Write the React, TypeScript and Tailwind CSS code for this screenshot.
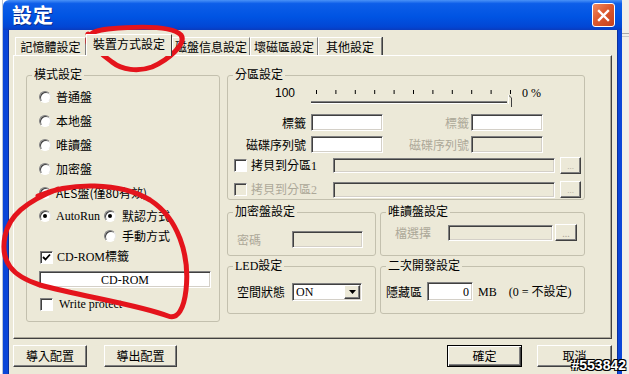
import React from 'react';

const cjk = "font-['Noto_Sans_CJK_TC',sans-serif]";
const mixed = "font-['Liberation_Serif','Noto_Sans_CJK_TC',serif]";

function Radio({ on }: { on?: boolean }) {
  return (
    <span className="flex items-center justify-center w-[12px] h-[12px] shrink-0 rounded-full bg-white border border-t-[#808080] border-l-[#808080] border-b-white border-r-[#e8e8e8] shadow-[inset_1px_1px_0_#404040]">
      {on && <span className="w-[4px] h-[4px] rounded-full bg-black" />}
    </span>
  );
}

function Check({ on, disabled }: { on?: boolean; disabled?: boolean }) {
  return (
    <span
      className={`flex items-center justify-center w-[13px] h-[13px] shrink-0 border border-t-[#808080] border-l-[#808080] border-b-white border-r-white shadow-[inset_1px_1px_0_#404040] ${
        disabled ? 'bg-[#ece9d8]' : 'bg-white'
      }`}
    >
      {on && (
        <svg width="9" height="9" viewBox="0 0 9 9">
          <path d="M1 4 L3.5 6.5 L8 1.5" stroke="#000" strokeWidth="1.8" fill="none" />
        </svg>
      )}
    </span>
  );
}

function Field({
  className = '',
  gray,
  children,
}: {
  className?: string;
  gray?: boolean;
  children?: React.ReactNode;
}) {
  return (
    <div
      className={`shrink-0 border border-t-[#808080] border-l-[#808080] border-b-white border-r-white shadow-[inset_1px_1px_0_#404040,inset_-1px_-1px_0_#d4d0c8] ${
        gray ? 'bg-[#ece9d8]' : 'bg-white'
      } ${className}`}
    >
      {children}
    </div>
  );
}

function Dots({ className = '' }: { className?: string }) {
  return (
    <div
      className={`shrink-0 flex items-end justify-center pb-[2px] text-[9px] leading-[9px] text-[#aca899] bg-[#ece9d8] border border-t-white border-l-white border-b-[#404040] border-r-[#404040] shadow-[inset_-1px_-1px_0_#808080] ${className}`}
    >
      ...
    </div>
  );
}

function Group({
  title,
  className = '',
  children,
}: {
  title: string;
  className?: string;
  children?: React.ReactNode;
}) {
  return (
    <fieldset className={`border border-[#c3c0ae] rounded-[3px] shrink-0 ${className}`}>
      <legend className={`ml-[5px] px-[2px] text-[12px] leading-[14px] text-black ${mixed}`}>{title}</legend>
      {children}
    </fieldset>
  );
}

function Btn({ label, def, className = '' }: { label: string; def?: boolean; className?: string }) {
  return (
    <div
      className={`h-[22px] flex items-center justify-center text-[12px] leading-[14px] text-black ${cjk} ${
        def
          ? 'border border-black shadow-[inset_1px_1px_0_#fff,inset_-1px_-1px_0_#404040,inset_-2px_-2px_0_#808080]'
          : 'border border-t-white border-l-white border-b-[#404040] border-r-[#404040] shadow-[inset_-1px_-1px_0_#808080]'
      } ${className}`}
    >
      {label}
    </div>
  );
}

const tabs = [
  { t: '記憶體設定', w: 'w-[71px]' },
  { t: '裝置方式設定', w: 'w-[86px]', sel: true },
  { t: '磁盤信息設定', w: 'w-[78px]' },
  { t: '壞磁區設定', w: 'w-[68px]' },
  { t: '其他設定', w: 'w-[64px]' },
];

const modes = ['普通盤', '本地盤', '唯讀盤', '加密盤', 'AES盤(僅80有效)'];

export default function App() {
  const gray = 'text-[#aca899]';
  return (
    <div className={`relative w-[629px] h-[374px] overflow-hidden flex bg-white text-[12px] leading-[14px] ${mixed}`}>
      {/* background window sliver */}
      <div className="w-[3px] bg-white border-r border-[#b8c4d8]" />

      <div className="w-[619px] flex flex-col">
        {/* title bar */}
        <div className="h-[30px] flex items-center pl-[9px] pr-[7px] rounded-tl-[6px] bg-[linear-gradient(180deg,#4a92f7_0%,#0d5ee9_12%,#0054e3_55%,#0246d4_90%,#0a3bbd_100%)]">
          <span className={`text-[20px] leading-[24px] font-bold text-white tracking-[1px] [text-shadow:1px_1px_0_#0b2a8c] ${cjk}`}>
            設定
          </span>
          <div className="ml-auto w-[23px] h-[24px] rounded-[3px] border border-white flex items-center justify-center bg-[linear-gradient(135deg,#f08a62_0%,#dd5a2f_45%,#c5401c_100%)]">
            <svg width="13" height="13" viewBox="0 0 13 13">
              <path d="M2 2 L11 11 M11 2 L2 11" stroke="#fff" strokeWidth="2.4" strokeLinecap="square" />
            </svg>
          </div>
        </div>

        {/* body with frame */}
        <div className="flex-1 flex">
          <div className="w-[6px] bg-[#0b46d8] border-r border-[#0a2f9e]" />
          <div className="w-[608px] bg-[#ece9d8] flex flex-col">
            {/* tabs */}
            <div className={`flex items-end h-[25px] pl-[6px] ${cjk}`}>
              {tabs.map((tab) =>
                tab.sel ? (
                  <div
                    key={tab.t}
                    className={`${tab.w} h-[22px] -mb-[1px] relative z-10 bg-[#ece9d8] border-t border-l border-white border-r border-r-[#404040] flex items-center justify-center pb-[3px]`}
                  >
                    {tab.t}
                  </div>
                ) : (
                  <div
                    key={tab.t}
                    className={`${tab.w} h-[18px] border-t border-l border-white border-r border-r-[#808080] shadow-[1px_0_0_#404040] flex items-center justify-center`}
                  >
                    {tab.t}
                  </div>
                )
              )}
            </div>

            {/* tab panel */}
            <div className="ml-[4px] w-[599px] h-[284px] border border-t-white border-l-white border-b-[#404040] border-r-[#404040] shadow-[inset_-1px_-1px_0_#aca899] flex pl-[12px] pt-[12px] gap-[7px]">
              {/* 模式設定 */}
              <Group title="模式設定" className="w-[194px] h-[254px]">
                <div className="pl-[12px] pt-[3px] flex flex-col">
                  {modes.map((m) => (
                    <div key={m} className="h-[24px] flex items-center gap-[5px]">
                      <Radio />
                      <span className={cjk}>{m}</span>
                    </div>
                  ))}
                  <div className="h-[22px] flex items-center">
                    <Radio on />
                    <span className="ml-[5px] w-[48px]">AutoRun</span>
                    <Radio on />
                    <span className={`ml-[6px] ${cjk}`}>默認方式</span>
                  </div>
                  <div className="h-[18px] flex items-center pl-[65px]">
                    <Radio />
                    <span className={`ml-[6px] ${cjk}`}>手動方式</span>
                  </div>
                  <div className="h-[24px] flex items-center pl-[1px] gap-[4px]">
                    <Check on />
                    <span>CD-ROM標籤</span>
                  </div>
                  <Field className="mt-[2px] w-[172px] h-[17px] flex items-center justify-center">
                    <span>CD-ROM</span>
                  </Field>
                  <div className="mt-[8px] h-[16px] flex items-center pl-[1px] gap-[6px]">
                    <Check />
                    <span>Write protect</span>
                  </div>
                </div>
              </Group>

              {/* right column */}
              <div className="w-[358px] flex flex-col">
                <Group title="分區設定" className="w-[358px] h-[132px]">
                  <div className="flex h-[26px]">
                    <span className="ml-[47px] w-[36px] mt-[4px] font-['Liberation_Sans',sans-serif]">100</span>
                    <svg width="210" height="26" viewBox="0 0 210 26">
                      {Array.from({ length: 11 }).map((_, i) => (
                        <line key={i} x1={5.5 + i * 19.4} y1="8" x2={5.5 + i * 19.4} y2="12" stroke="#000" strokeWidth="1" />
                      ))}
                      <line x1="0" y1="19.5" x2="196" y2="19.5" stroke="#808080" />
                      <line x1="0" y1="20.5" x2="196" y2="20.5" stroke="#404040" />
                      <line x1="0" y1="21.5" x2="196" y2="21.5" stroke="#fff" />
                      <path d="M197.5 13 L200.5 16 L200.5 25" stroke="#404040" fill="none" />
                      <path d="M197.5 13 L197.5 22" stroke="#fff" fill="none" />
                    </svg>
                    <span className="ml-[1px] mt-[4px]">0 %</span>
                  </div>
                  <div className={`mt-[6px] flex items-center h-[17px] ${cjk}`}>
                    <span className="w-[83px] pr-[5px] text-right">標籤</span>
                    <Field className="w-[72px] h-[17px]" />
                    <span className={`w-[88px] pr-[2px] text-right ${gray}`}>標籤</span>
                    <Field className="w-[72px] h-[17px]" />
                  </div>
                  <div className={`mt-[5px] flex items-center h-[17px] ${cjk}`}>
                    <span className="w-[83px] pr-[5px] text-right">磁碟序列號</span>
                    <Field className="w-[72px] h-[17px]" />
                    <span className={`w-[88px] pr-[2px] text-right ${gray}`}>磁碟序列號</span>
                    <Field gray className="w-[72px] h-[17px]" />
                  </div>
                  <div className="mt-[4px] flex items-center h-[17px]">
                    <span className="ml-[6px]">
                      <Check />
                    </span>
                    <span className="ml-[4px] w-[82px]">拷貝到分區1</span>
                    <Field gray className="w-[222px] h-[15px]" />
                    <Dots className="ml-[5px] w-[21px] h-[17px]" />
                  </div>
                  <div className="mt-[7px] flex items-center h-[17px]">
                    <span className="ml-[6px]">
                      <Check disabled />
                    </span>
                    <span className={`ml-[4px] w-[82px] ${gray}`}>拷貝到分區2</span>
                    <Field gray className="w-[222px] h-[16px]" />
                    <Dots className="ml-[5px] w-[21px] h-[17px]" />
                  </div>
                </Group>

                <div className="mt-[5px] flex gap-[4px]">
                  <Group title="加密盤設定" className="w-[149px] h-[51px]">
                    <div className={`mt-[12px] flex items-center h-[17px] ${cjk}`}>
                      <span className={`ml-[9px] w-[55px] ${gray}`}>密碼</span>
                      <Field gray className="w-[71px] h-[17px]" />
                    </div>
                  </Group>
                  <Group title="唯讀盤設定" className="w-[205px] h-[51px]">
                    <div className={`mt-[5px] flex items-center h-[17px] ${cjk}`}>
                      <span className={`ml-[14px] w-[53px] ${gray}`}>檔選擇</span>
                      <Field gray className="w-[105px] h-[16px]" />
                      <Dots className="ml-[2px] w-[22px] h-[17px]" />
                    </div>
                  </Group>
                </div>

                <div className="mt-[3px] flex gap-[4px]">
                  <Group title="LED設定" className="w-[149px] h-[55px]">
                    <div className="mt-[10px] flex items-center h-[18px]">
                      <span className={`ml-[9px] w-[55px] ${cjk}`}>空間狀態</span>
                      <Field className="w-[70px] h-[18px] flex items-center pl-[3px]">
                        <span className="flex-1">ON</span>
                        <div className="w-[16px] h-[14px] mr-[1px] flex items-center justify-center bg-[#ece9d8] border border-t-white border-l-white border-b-[#404040] border-r-[#404040] shadow-[inset_-1px_-1px_0_#808080]">
                          <svg width="7" height="4" viewBox="0 0 7 4">
                            <path d="M0 0 H7 L3.5 4 Z" fill="#000" />
                          </svg>
                        </div>
                      </Field>
                    </div>
                  </Group>
                  <Group title="二次開發設定" className="w-[205px] h-[55px]">
                    <div className="mt-[9px] flex items-center h-[19px]">
                      <span className={`ml-[5px] w-[41px] ${cjk}`}>隱藏區</span>
                      <Field className="w-[46px] h-[19px] flex items-center justify-end pr-[3px]">
                        <span>0</span>
                      </Field>
                      <span className="ml-[5px]">MB</span>
                      <span className="ml-[12px]">(0 = 不設定)</span>
                    </div>
                  </Group>
                </div>
              </div>
            </div>

            {/* bottom buttons */}
            <div className="mt-[6px] flex">
              <Btn label="導入配置" className="ml-[4px] w-[74px]" />
              <Btn label="導出配置" className="ml-[17px] w-[73px]" />
              <Btn label="確定" def className="ml-[270px] w-[75px]" />
              <Btn label="取消" className="ml-[15px] w-[75px]" />
            </div>
          </div>
          <div className="w-[5px] bg-[#0b46d8] border-l border-[#0a2f9e]" />
        </div>
      </div>

      {/* background window sliver right */}
      <div className="flex-1 bg-[#f1efe8] flex flex-col">
        <div className="mt-[33px] h-[1px] bg-[#a8a8a8]" />
        <div className="mt-[2px] h-[1px] bg-[#c8c8c8]" />
      </div>

      {/* watermark */}
      <span className="absolute right-[3px] bottom-[1px] text-[14px] leading-[16px] font-bold text-white font-['Liberation_Sans',sans-serif] [text-shadow:1px_1px_0_#000,-1px_-1px_0_#000,1px_-1px_0_#000,-1px_1px_0_#000]">
        #553842
      </span>

      {/* red hand-drawn annotations */}
      <svg className="absolute inset-0 pointer-events-none" width="629" height="374" viewBox="0 0 629 374">
        <path
          d="M92 52 C84 40 86 31 108 29 C140 26 172 26 181 35 C187 44 168 60 152 67 C138 72 122 70 112 62 C100 54 92 45 88 34"
          stroke="#e4141c"
          strokeWidth="5"
          fill="none"
          strokeLinecap="round"
        />
        <path
          d="M38 196 C70 182 120 182 150 200 C178 218 190 255 186 290 C184 308 178 320 168 316 C140 305 80 296 40 285 C12 276 0 262 5 236 C9 216 25 202 58 189"
          stroke="#e4141c"
          strokeWidth="5"
          fill="none"
          strokeLinecap="round"
        />
      </svg>
    </div>
  );
}
